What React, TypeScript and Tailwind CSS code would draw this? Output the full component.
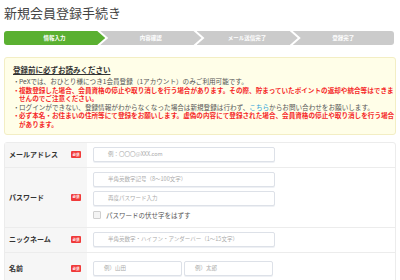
import React from 'react';

const steps = ['情報入力', '内容確認', 'メール送信完了', '登録完了'];

function Badge() {
    return (
        <span className="flex h-[7px] w-[10px] items-center justify-center rounded-[1px] bg-[#f03a3a] text-[3.5px] font-bold leading-none text-white">
            必須
        </span>
    );
}

function Label({ text }: { text: string }) {
    return (
        <div className="flex w-[82px] shrink-0 items-center justify-between bg-[#f6f6f6] pl-[4px] pr-[6px]">
            <span className="text-[7px] font-bold text-[#333]">{text}</span>
            <Badge />
        </div>
    );
}

function Field({ ph, w = 'w-[182px]', pl = 'pl-[14px]' }: { ph: string; w?: string; pl?: string }) {
    return (
        <div className={`flex h-[15px] ${w} items-center rounded-[2px] border border-[#dde1e8] bg-white ${pl} shadow-[0_1px_0_#eef0f4] text-[5.5px] text-[#aaa] whitespace-nowrap`}>
            {ph}
        </div>
    );
}

export default function App() {
    return (
        <div className="h-[280px] w-[400px] overflow-hidden bg-white px-[4px] font-['Noto_Sans_CJK_JP',sans-serif]">
            <h1 className="pt-[4px] text-[13px] leading-[17px] text-[#444]">新規会員登録手続き</h1>

            {/* steps */}
            <div className="mt-[10px] flex h-[14px] w-[390px]">
                {steps.map((s, i) => (
                    <div
                        key={s}
                        className={
                            'flex flex-1 items-center justify-center text-[5.5px] font-bold text-white ' +
                            (i === 0
                                ? 'rounded-l-[3px] bg-[#5ab031] [clip-path:polygon(0_0,calc(100%-8px)_0,100%_50%,calc(100%-8px)_100%,0_100%)]'
                                : i === 3
                                ? '-ml-[5px] rounded-r-[3px] bg-[#cbcbcb] [clip-path:polygon(0_0,100%_0,100%_100%,0_100%,8px_50%)]'
                                : '-ml-[5px] bg-[#cbcbcb] [clip-path:polygon(0_0,calc(100%-8px)_0,100%_50%,calc(100%-8px)_100%,0_100%,8px_50%)]')
                        }
                    >
                        {s}
                    </div>
                ))}
            </div>

            {/* notice */}
            <div className="mt-[12px] w-[392px] rounded-[3px] border border-[#f3eec4] bg-[#fffee8] pb-[5px] pl-[8px] pr-[4px] pt-[7px]">
                <p className="text-[7.5px] font-bold leading-[10px] text-[#333] underline">登録前に必ずお読みください</p>
                <ul className="mt-[2px] whitespace-nowrap text-[6.6px] leading-[8.6px]">
                    <li className="flex text-[#555]">
                        <span className="w-[6px] shrink-0">・</span>
                        <span>PeXでは、おひとり様につき1会員登録（1アカウント）のみご利用可能です。</span>
                    </li>
                    <li className="flex font-bold text-[#f52a2a]">
                        <span className="w-[6px] shrink-0">・</span>
                        <span>
                            複数登録した場合、会員資格の停止や取り消しを行う場合があります。その際、貯まっていたポイントの返却や統合等はできま
                            <br />
                            せんのでご注意ください。
                        </span>
                    </li>
                    <li className="flex text-[#555]">
                        <span className="w-[6px] shrink-0">・</span>
                        <span>
                            ログインができない、登録情報がわからなくなった場合は新規登録は行わず、
                            <span className="text-[#2b9fd9]">こちら</span>
                            からお問い合わせをお願いします。
                        </span>
                    </li>
                    <li className="flex font-bold text-[#f52a2a]">
                        <span className="w-[6px] shrink-0">・</span>
                        <span>
                            必ず本名・お住まいの住所等にて登録をお願いします。虚偽の内容にて登録された場合、会員資格の停止や取り消しを行う場合
                            <br />
                            があります。
                        </span>
                    </li>
                </ul>
            </div>

            {/* form */}
            <div className="mt-[7px] w-[392px] rounded-[3px] border border-[#ececec]">
                <div className="flex h-[25px] border-b border-[#ececec]">
                    <Label text="メールアドレス" />
                    <div className="flex items-center pl-[6px]">
                        <Field ph="例：〇〇〇@XXX.com" />
                    </div>
                </div>
                <div className="flex h-[60px] border-b border-[#ececec]">
                    <Label text="パスワード" />
                    <div className="flex flex-col gap-[4px] pl-[6px] pt-[4px]">
                        <Field ph="半角英数字記号（8～100文字）" />
                        <Field ph="再度パスワード入力" />
                        <div className="mt-[1px] flex items-center gap-[5px]">
                            <span className="h-[8px] w-[8px] rounded-[1px] border border-[#cfcfcf] bg-[#f4f4f4]" />
                            <span className="text-[6.5px] leading-[9px] text-[#555]">パスワードの伏せ字をはずす</span>
                        </div>
                    </div>
                </div>
                <div className="flex h-[25px] border-b border-[#ececec]">
                    <Label text="ニックネーム" />
                    <div className="flex items-center pl-[6px]">
                        <Field ph="半角英数字・ハイフン・アンダーバー（1～15文字）" />
                    </div>
                </div>
                <div className="flex h-[32px]">
                    <Label text="名前" />
                    <div className="flex items-start gap-[2px] pl-[6px] pt-[8px]">
                        <Field ph="例）山田" w="w-[89px]" pl="pl-[10px]" />
                        <Field ph="例）太郎" w="w-[89px]" pl="pl-[10px]" />
                    </div>
                </div>
            </div>
        </div>
    );
}
